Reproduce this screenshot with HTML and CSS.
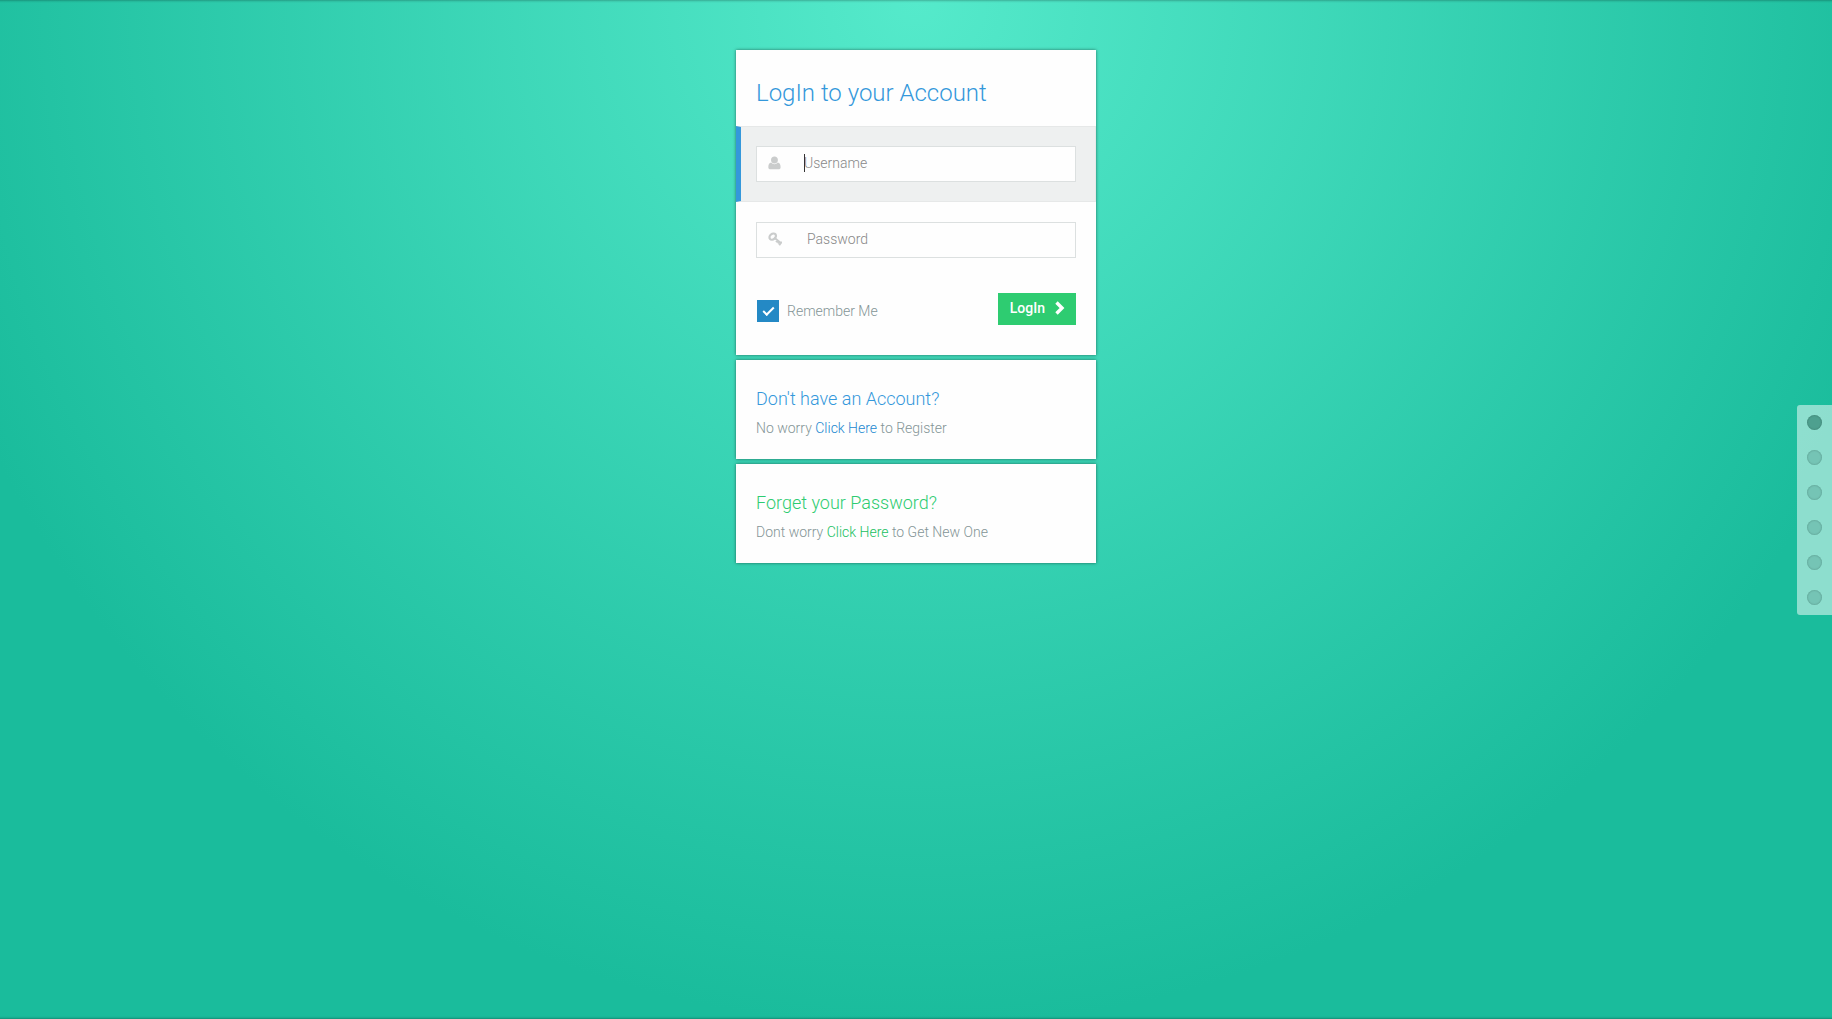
FILE: index.html
```
<!DOCTYPE html>
<html lang="en">
<head>
<meta charset="utf-8">
<meta name="viewport" content="width=device-width, initial-scale=1">
<title>LogIn</title>
<link rel="stylesheet" href="styles.css">
</head>
<body>
<main class="login">
  <form class="card">
    <h1 class="title">LogIn to your Account</h1>
    <div class="row row-active">
      <label class="field">
        <svg class="icon" viewBox="0 0.600 13 13" aria-hidden="true"><path fill="currentColor" d="M6 1C8 1 9.200 2.400 9.200 4.200S8 7.600 6 7.600 2.800 6 2.800 4.200 4 1 6 1zM3 6.600C3.800 7.700 4.800 8.200 6 8.200s2.200-.5 3-1.600c2 .3 2.700 2 2.700 4.400 0 1.300-.8 2-2 2H2.300c-1.200 0-2-.7-2-2 0-2.400.7-4.100 2.700-4.400z"/></svg>
        <span class="caret"></span>
        <input class="input" type="text" placeholder="Username" aria-label="Username">
      </label>
    </div>
    <div class="row">
      <label class="field">
        <svg class="icon" viewBox="0 0 14 14" aria-hidden="true"><g fill="none" stroke="currentColor"><ellipse cx="4.700" cy="4.600" rx="3.600" ry="2.700" stroke-width="2.200" transform="rotate(-40 4.700 4.600)"/><path stroke-width="2" d="M7 6.200l6.500 5.400M9.600 8.600L8 10.100M12.600 11.300L11.200 13.300M11 9.800l-1.200 1.500M12.300 11.500l1.700-1.500"/></g></svg>
        <input class="input" type="password" placeholder="Password" aria-label="Password">
      </label>
    </div>
    <div class="actions">
      <label class="remember"><input class="check" type="checkbox" checked><span>Remember Me</span></label>
      <button class="button" type="button">LogIn
        <svg class="chevron" viewBox="0 0 10 14" aria-hidden="true"><path fill="none" stroke="currentColor" stroke-width="3.400" d="M1.500 1.500L7 7l-5.500 5.500"/></svg>
      </button>
    </div>
  </form>
  <section class="card note">
    <h2 class="subtitle">Don't have an Account?</h2>
    <p class="text">No worry <a class="link" href="#register">Click Here</a> to Register</p>
  </section>
  <section class="card note note-green">
    <h2 class="subtitle">Forget your Password?</h2>
    <p class="text">Dont worry <a class="link" href="#reset">Click Here</a> to Get New One</p>
  </section>
</main>
<nav class="switcher" aria-label="Pages">
  <a class="dot dot-current" href="#1" aria-label="Page 1"></a>
  <a class="dot" href="#2" aria-label="Page 2"></a>
  <a class="dot" href="#3" aria-label="Page 3"></a>
  <a class="dot" href="#4" aria-label="Page 4"></a>
  <a class="dot" href="#5" aria-label="Page 5"></a>
  <a class="dot" href="#6" aria-label="Page 6"></a>
</nav>
</body>
</html>
```
FILE: styles.css
```
*,
*::before { box-sizing: border-box; }

body {
  margin: 0;
  min-height: 100vh;
  padding: 50px 0;
  font: 300 14px/20px Roboto, "Liberation Sans", sans-serif;
  color: #849596;
  background: radial-gradient(circle farthest-corner at 50% 0, #55eacb 0, #1abc9c 75%);
  box-shadow:
    inset 0 3px 3px -3px rgba(0, 0, 0, 0.5),
    inset 0 -3px 3px -3px rgba(0, 0, 0, 0.5);
}

.login {
  display: flex;
  flex-direction: column;
  gap: 5px;
  width: 100%;
  max-width: 360px;
  margin: 0 auto;
}

.card {
  background: #fefefe;
  box-shadow: 0 0 3px rgba(0, 0, 0, 0.5);
}

.title {
  margin: 0;
  padding: 28px 20px 18px;
  font-size: 24px;
  line-height: 30px;
  font-weight: 300;
  color: #3498db;
}

.row { padding: 20px; }

.row-active {
  padding: 19px 19px 19px 15px;
  border: 1px solid #e6e8e8;
  border-left: 5px solid #3498db;
  background: #eef0f0;
}

.field {
  position: relative;
  display: flex;
  align-items: center;
  height: 36px;
  padding: 0 0 2px 11px;
  border: 1px solid #dce0e0;
  background: #fefefe;
}

.icon {
  flex: none;
  width: 14px;
  height: 14px;
  color: #cacccc;
}

.input {
  flex: 1;
  min-width: 0;
  padding: 0 10px 0 25px;
  border: 0;
  outline: 0;
  background: none;
  font: inherit;
  color: #555;
}

.row-active .input { padding-left: 22px; }

.input::placeholder { color: #888; opacity: 1; }

.caret {
  position: absolute;
  left: 47px;
  width: 1px;
  height: 18px;
  background: #333;
}

.actions {
  display: flex;
  justify-content: space-between;
  align-items: flex-start;
  padding: 15px 20px 30px;
}

.remember {
  display: flex;
  align-items: center;
  gap: 8px;
  padding: 7px 0 0 1px;
}

.check {
  appearance: none;
  width: 22px;
  height: 22px;
  margin: 0;
  background: #2489c5;
  display: grid;
  place-items: center;
}

.check:checked::before {
  content: "";
  width: 11px;
  height: 6px;
  margin-bottom: 3px;
  border: solid #fff;
  border-width: 0 0 2px 2px;
  transform: rotate(-45deg);
}

.button {
  display: flex;
  align-items: center;
  gap: 10px;
  height: 32px;
  padding: 0 11px 2px 12px;
  border: 0;
  background: #2ecc71;
  color: #fff;
  font: 500 14px/20px Roboto, "Liberation Sans", sans-serif;
}

.chevron { width: 10px; height: 14px; }

.note { padding: 28px 20px 21px; }

.subtitle {
  margin: 0 0 8px;
  font-size: 18px;
  line-height: 22px;
  font-weight: 300;
  color: #3498db;
}

.text { margin: 0; }

.link { color: #2288d0; text-decoration: none; }

.note-green .subtitle { color: #2ecc71; }

.note-green .link { color: #18c060; }

.switcher {
  position: fixed;
  right: 0;
  top: 50%;
  transform: translateY(-50%);
  display: flex;
  flex-direction: column;
  gap: 20px;
  padding: 10px;
  border-radius: 3px 0 0 3px;
  background: rgba(255, 255, 255, 0.5);
}

.dot {
  width: 15px;
  height: 15px;
  border-radius: 50%;
  background: #75c4b5;
  box-shadow: inset 0 0 2px rgba(0, 0, 0, 0.3);
}

.dot-current { background: #4ea08f; }
```
